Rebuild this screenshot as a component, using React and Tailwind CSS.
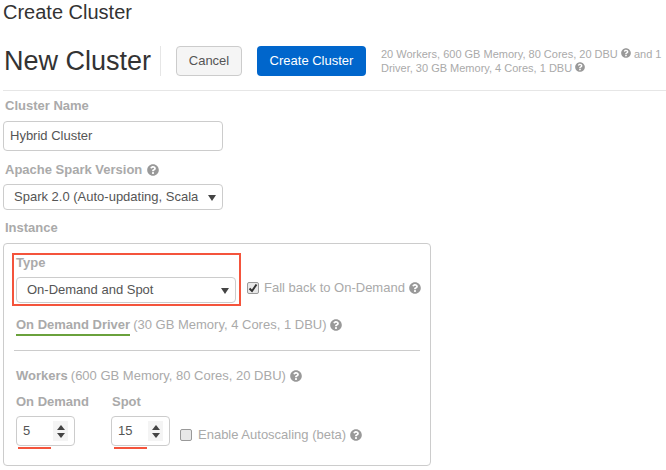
import { FaQuestionCircle } from "react-icons/fa";

function Help({ className = "" }) {
  return <FaQuestionCircle size={12} className={`inline-block shrink-0 text-[#999] ${className}`} />;
}

function Label({ children, className = "" }) {
  return <div className={`text-[13px] leading-[16px] font-bold text-[#aaa] ${className}`}>{children}</div>;
}

function Caret() {
  return (
    <svg width="8" height="7" viewBox="0 0 8 7" className="shrink-0">
      <path d="M0 1h8L4 7z" fill="#444" />
    </svg>
  );
}

function SelectBox({ value, className = "" }) {
  return (
    <div className={`flex h-[26px] w-[220px] items-center justify-between rounded-[4px] border border-[#ccc] bg-white text-[13px] text-[#555] ${className}`}>
      <span className="whitespace-nowrap">{value}</span>
      <Caret />
    </div>
  );
}

function NumberBox({ value }) {
  return (
    <div className="flex h-[30px] w-[59px] items-center justify-between rounded-[4px] border border-[#ccc] bg-white pr-[6px] pl-[6px] text-[13px] text-[#555]">
      <span>{value}</span>
      <div className="flex h-[20px] w-[15px] flex-col items-center justify-center gap-[3px] bg-[#f4f4f4]">
        <svg width="8" height="5" viewBox="0 0 8 5"><path d="M4 0l4 5H0z" fill="#444" /></svg>
        <svg width="8" height="5" viewBox="0 0 8 5"><path d="M0 0h8L4 5z" fill="#444" /></svg>
      </div>
    </div>
  );
}

function Checkbox({ checked }) {
  return (
    <span className="flex h-[12px] w-[12px] shrink-0 items-center justify-center rounded-[2px] border border-[#999] bg-[#e8e8e8]">
      {checked && (
        <svg width="10" height="10" viewBox="0 0 10 10">
          <path d="M1.5 5.5L4 8l4.5-6.5" fill="none" stroke="#333" strokeWidth="2" />
        </svg>
      )}
    </span>
  );
}

export default function App() {
  return (
    <div className="h-[470px] w-[666px] overflow-hidden bg-white pl-[3px] font-['Liberation_Sans',Arial,sans-serif]">
      <h1 className="h-[24px] text-[20px] leading-[24px] font-normal whitespace-nowrap text-[#333]">Create Cluster</h1>

      {/* page header */}
      <div className="mt-[22px] flex h-[45px] items-start border-b border-[#e6e6e6]">
        <div className="flex h-[30px] w-[158px] items-center border-r border-[#e6e6e6] pl-px text-[27px] whitespace-nowrap text-[#333]">
          New Cluster
        </div>
        <button className="ml-[15px] h-[30px] w-[66px] rounded-[4px] border border-[#ccc] bg-[#f5f5f5] text-[13px] text-[#555]">
          Cancel
        </button>
        <button className="ml-[15px] h-[30px] w-[109px] rounded-[4px] bg-[#0066cc] text-[13px] text-white">
          Create Cluster
        </button>
        <p className="ml-[15px] w-[282px] pt-[1px] text-[11px] leading-[14px] text-[#aaa]">
          20 Workers, 600 GB Memory, 80 Cores, 20 DBU <Help className="w-[10px] align-[-1px]" /> and 1 Driver, 30 GB Memory, 4 Cores, 1 DBU <Help className="w-[10px] align-[-1px]" />
        </p>
      </div>

      <Label className="mt-[7px] pl-[2px]">Cluster Name</Label>
      <div className="mt-[7px] flex h-[30px] w-[220px] items-center rounded-[4px] border border-[#ccc] bg-white pl-[6px] text-[13px] text-[#555]">
        Hybrid Cluster
      </div>

      <Label className="mt-[11px] flex items-center gap-[5px] pl-[2px]">
        Apache Spark Version <Help />
      </Label>
      <SelectBox value="Spark 2.0 (Auto-updating, Scala" className="mt-[6px] pr-[6px] pl-[10px]" />

      <Label className="mt-[10px] pl-[2px]">Instance</Label>

      {/* instance panel */}
      <div className="mt-[7px] h-[223px] w-[428px] rounded-[4px] border border-[#ccc] pt-[9px] pl-[8px]">
        <div className="flex items-start">
          <div className="h-[53px] w-[229px] border-2 border-[#f4543c] pl-[2px]">
            <Label>Type</Label>
            <SelectBox value="On-Demand and Spot" className="mt-[6px] pr-[6px] pl-[10px]" />
          </div>
          <div className="mt-[27px] ml-[6px] flex items-center text-[13px] leading-[16px] whitespace-nowrap text-[#aaa]">
            <Checkbox checked />
            <span className="ml-[5px]">Fall back to On-Demand</span>
            <Help className="ml-[4px]" />
          </div>
        </div>

        <div className="mt-[11px] flex items-center pl-[4px] text-[13px] leading-[16px] whitespace-nowrap text-[#aaa]">
          <span className="border-b-2 border-[#6aa13c] pb-px font-bold">On Demand Driver</span>
          <span className="-mt-[3px] ml-[3px]">(30 GB Memory, 4 Cores, 1 DBU)</span>
          <Help className="-mt-[3px] ml-[3px]" />
        </div>

        <div className="mt-[14px] mr-[10px] ml-[2px] border-t border-[#ccc]" />

        <div className="mt-[17px] flex items-center pl-[4px] text-[13px] leading-[16px] whitespace-nowrap text-[#aaa]">
          <span className="font-bold">Workers</span>
          <span className="ml-[3px]">(600 GB Memory, 80 Cores, 20 DBU)</span>
          <Help className="ml-[4px]" />
        </div>

        <div className="mt-[10px] flex pl-[4px]">
          <div className="w-[95px]">
            <Label>On Demand</Label>
            <div className="mt-[6px]">
              <NumberBox value="5" />
            </div>
            <div className="mt-px ml-[2px] h-[2px] w-[33px] bg-[#f4543c]" />
          </div>
          <div className="w-[69px]">
            <Label className="pl-px">Spot</Label>
            <div className="mt-[6px]">
              <NumberBox value="15" />
            </div>
            <div className="mt-px ml-[3px] h-[2px] w-[33px] bg-[#f4543c]" />
          </div>
          <div className="mt-[26px] flex h-[16px] items-center self-start pt-[14px] text-[13px] leading-[16px] whitespace-nowrap text-[#aaa]">
            <Checkbox />
            <span className="ml-[6px]">Enable Autoscaling (beta)</span>
            <Help className="ml-[4px]" />
          </div>
        </div>
      </div>
    </div>
  );
}
